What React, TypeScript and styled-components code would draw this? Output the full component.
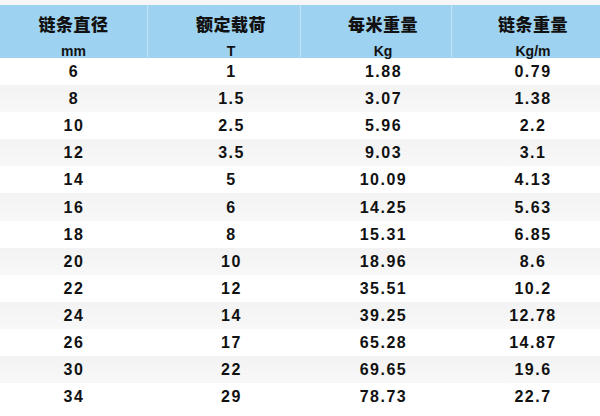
import styled, { createGlobalStyle } from 'styled-components';

const GlobalStyle = createGlobalStyle`
  html, body {
    margin: 0;
    padding: 0;
    background: #fafafa;
  }
  body {
    font-family: "Liberation Sans", "Noto Sans CJK SC", sans-serif;
  }
`;

const columns = [
  { title: '链条直径', unit: 'mm' },
  { title: '额定载荷', unit: 'T' },
  { title: '每米重量', unit: 'Kg' },
  { title: '链条重量', unit: 'Kg/m' },
];

const rows = [
  ['6', '1', '1.88', '0.79'],
  ['8', '1.5', '3.07', '1.38'],
  ['10', '2.5', '5.96', '2.2'],
  ['12', '3.5', '9.03', '3.1'],
  ['14', '5', '10.09', '4.13'],
  ['16', '6', '14.25', '5.63'],
  ['18', '8', '15.31', '6.85'],
  ['20', '10', '18.96', '8.6'],
  ['22', '12', '35.51', '10.2'],
  ['24', '14', '39.25', '12.78'],
  ['26', '17', '65.28', '14.87'],
  ['30', '22', '69.65', '19.6'],
  ['34', '29', '78.73', '22.7'],
];

function App() {
  return (
    <>
      <GlobalStyle />
      <Page>
        <HeaderRow>
          {columns.map((col, i) => (
            <HeaderCell key={col.title} $first={i === 0} $last={i === columns.length - 1}>
              <HeaderTitle>{col.title}</HeaderTitle>
              <HeaderUnit>{col.unit}</HeaderUnit>
            </HeaderCell>
          ))}
        </HeaderRow>
        {rows.map((row, r) => (
          <DataRow key={row[0]} $shaded={r % 2 === 1}>
            {row.map((value, i) => (
              <DataCell key={i} $first={i === 0}>
                {value}
              </DataCell>
            ))}
          </DataRow>
        ))}
      </Page>
    </>
  );
}

const Page = styled.div`
  width: 600px;
  height: 416px;
  padding-top: 5px;
  box-sizing: border-box;
  background: linear-gradient(180deg, #f6f6f6 0, #f6f6f6 5px, #ffffff 5px);
  overflow: hidden;
`;

const grid = `
  display: grid;
  grid-template-columns: 148px 153px 151px 148px;
`;

const HeaderRow = styled.div`
  ${grid}
  height: 53px;
  background: #9dd2f0;
`;

const HeaderCell = styled.div<{ $first: boolean; $last: boolean }>`
  display: flex;
  flex-direction: column;
  align-items: center;
  padding-left: ${({ $first }) => ($first ? '0' : '14px')};
  border-right: ${({ $last }) => ($last ? 'none' : '1px solid #c4e4f5')};
  color: #111;
`;

const HeaderTitle = styled.div`
  font-family: "Noto Sans CJK SC", sans-serif;
  font-weight: 900;
  font-size: 17px;
  line-height: 20px;
  margin-top: 9px;
  letter-spacing: 0.5px;
`;

const HeaderUnit = styled.div`
  font-weight: 700;
  font-size: 14px;
  line-height: 16px;
  margin-top: 9px;
`;

const DataRow = styled.div<{ $shaded: boolean }>`
  ${grid}
  height: 27.1px;
  background: ${({ $shaded }) =>
    $shaded ? 'linear-gradient(180deg, #f3f3f3, #f8f8f8)' : '#ffffff'};
`;

const DataCell = styled.div<{ $first: boolean }>`
  display: flex;
  align-items: center;
  justify-content: center;
  padding-left: ${({ $first }) => ($first ? '0' : '14px')};
  padding-top: 1px;
  font-weight: 700;
  font-size: 16px;
  letter-spacing: 1.5px;
  color: #111;
`;

export default App;
